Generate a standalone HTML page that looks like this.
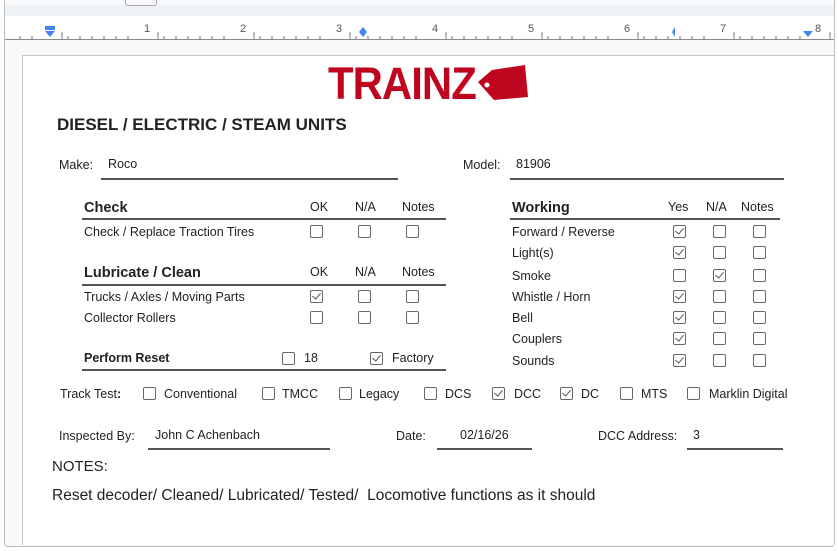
<!DOCTYPE html>
<html><head><meta charset="utf-8"><style>
*{margin:0;padding:0;box-sizing:border-box}
body{width:838px;height:551px;overflow:hidden;background:#fff;font-family:"Liberation Sans",sans-serif;color:#222;position:relative}
.a{position:absolute;white-space:nowrap;font-size:12.5px;line-height:16px}
.b{font-weight:bold}
.l{position:absolute;height:2px;background:#555}
.c{position:absolute;width:13px;height:13px;border:1.3px solid #666;border-radius:2px;background:#fff}
.c.k::after{content:"";position:absolute;left:3px;top:0px;width:4px;height:7px;border:solid #555;border-width:0 1.3px 1.3px 0;transform:rotate(40deg)}
</style></head><body>
<div style="position:absolute;left:4px;top:0;width:831px;height:547px;border:1px solid #bbb;border-top:none;border-radius:0 0 4px 4px;background:#f8f9fa"></div>
<div style="position:absolute;left:5px;top:5px;width:829px;height:11px;background:#eef1f6"></div>
<div style="position:absolute;left:125px;top:0;width:32px;height:6px;border:1px solid #aaa;border-top:none;border-radius:0 0 3px 3px"></div>
<svg style="position:absolute;left:5px;top:16px" width="829" height="24">
<rect x="0" y="0" width="829" height="23" fill="#fff"/>
<g transform="translate(-5 0)" stroke="#777" stroke-width="1">
<path d="M20 23v-3M32 23v-3M68 23v-3M80 23v-3M92 23v-3M104 23v-3M116 23v-3M128 23v-3M164 23v-3M176 23v-3M188 23v-3M200 23v-3M212 23v-3M224 23v-3M260 23v-3M272 23v-3M284 23v-3M296 23v-3M308 23v-3M320 23v-3M356 23v-3M368 23v-3M380 23v-3M392 23v-3M404 23v-3M416 23v-3M452 23v-3M464 23v-3M476 23v-3M488 23v-3M500 23v-3M512 23v-3M548 23v-3M560 23v-3M572 23v-3M584 23v-3M596 23v-3M608 23v-3M644 23v-3M656 23v-3M668 23v-3M680 23v-3M692 23v-3M704 23v-3M740 23v-3M752 23v-3M764 23v-3M776 23v-3M788 23v-3M800 23v-3"/>
<path d="M62 23v-7M158 23v-7M254 23v-7M350 23v-7M446 23v-7M542 23v-7M638 23v-7M734 23v-7M830 23v-7"/>
</g>
<g transform="translate(-5 0)" font-size="11" fill="#555" font-family="Liberation Sans" text-anchor="middle"><text x="147" y="16">1</text><text x="243" y="16">2</text><text x="339" y="16">3</text><text x="435" y="16">4</text><text x="531" y="16">5</text><text x="627" y="16">6</text><text x="723" y="16">7</text><text x="818" y="16">8</text>
<rect x="45" y="10" width="10" height="4" fill="#4285f4"/>
<path d="M45 15h10l-5 6z" fill="#4285f4"/>
<path d="M363 11l4 5-4 5-4-5z" fill="#4285f4"/>
<path d="M675 11v10l-3-5z" fill="#4285f4"/>
<path d="M803 15h10l-5 6z" fill="#4285f4"/></g>
</svg>
<div style="position:absolute;left:5px;top:39px;width:829px;height:1px;background:#888"></div>
<div style="position:absolute;left:22px;top:55px;width:812px;height:490px;background:#fff;border-left:1px solid #c8c8c8;border-top:1px solid #c8c8c8"></div>

<div class="a b" style="left:328px;top:60px;font-size:45px;line-height:48px;color:#c0061f;transform:scaleX(0.93);transform-origin:left;letter-spacing:-1px">TRAINZ</div>
<svg style="position:absolute;left:466px;top:60px" width="70" height="44"><path d="M12 22l14-12 33-5 3 32-34 3z" fill="#c0061f"/><circle cx="21" cy="25" r="2.5" fill="#fff"/></svg>

<div class="a b" style="left:57px;top:115px;font-size:17px;line-height:20px">DIESEL / ELECTRIC / STEAM UNITS</div>

<div class="a" style="left:59px;top:157px">Make:</div><div class="a" style="left:108px;top:156px">Roco</div><div class="l" style="left:101px;top:178px;width:297px"></div>
<div class="a" style="left:463px;top:157px">Model:</div><div class="a" style="left:516px;top:156px">81906</div><div class="l" style="left:510px;top:178px;width:274px"></div>

<div class="a b" style="left:84px;top:200px;font-size:14.5px">Check</div>
<div class="a" style="left:310px;top:199px">OK</div><div class="a" style="left:355px;top:199px">N/A</div><div class="a" style="left:402px;top:199px">Notes</div>
<div class="l" style="left:82px;top:218px;width:364px"></div>
<div class="a" style="left:84px;top:224px">Check / Replace Traction Tires</div>
<div class="c" style="left:310px;top:225px"></div><div class="c" style="left:358px;top:225px"></div><div class="c" style="left:406px;top:225px"></div>

<div class="a b" style="left:84px;top:265px;font-size:14.5px">Lubricate / Clean</div>
<div class="a" style="left:310px;top:264px">OK</div><div class="a" style="left:355px;top:264px">N/A</div><div class="a" style="left:402px;top:264px">Notes</div>
<div class="l" style="left:82px;top:284px;width:364px"></div>
<div class="a" style="left:84px;top:289px">Trucks / Axles / Moving Parts</div>
<div class="c k" style="left:310px;top:290px"></div><div class="c" style="left:358px;top:290px"></div><div class="c" style="left:406px;top:290px"></div>
<div class="a" style="left:84px;top:310px">Collector Rollers</div>
<div class="c" style="left:310px;top:311px"></div><div class="c" style="left:358px;top:311px"></div><div class="c" style="left:406px;top:311px"></div>

<div class="a b" style="left:84px;top:350px">Perform Reset</div>
<div class="c" style="left:282px;top:352px"></div><div class="a" style="left:304px;top:350px">18</div>
<div class="c k" style="left:370px;top:352px"></div><div class="a" style="left:392px;top:350px">Factory</div>
<div class="l" style="left:82px;top:369px;width:364px"></div>

<div class="a b" style="left:512px;top:200px;font-size:14.5px">Working</div>
<div class="a" style="left:668px;top:199px">Yes</div><div class="a" style="left:706px;top:199px">N/A</div><div class="a" style="left:741px;top:199px">Notes</div>
<div class="l" style="left:510px;top:218px;width:270px"></div>
<div class="a" style="left:512px;top:224px">Forward / Reverse</div>
<div class="a" style="left:512px;top:245px">Light(s)</div>
<div class="a" style="left:512px;top:268px">Smoke</div>
<div class="a" style="left:512px;top:289px">Whistle / Horn</div>
<div class="a" style="left:512px;top:310px">Bell</div>
<div class="a" style="left:512px;top:331px">Couplers</div>
<div class="a" style="left:512px;top:353px">Sounds</div>
<div class="c k" style="left:673px;top:225px"></div><div class="c" style="left:713px;top:225px"></div><div class="c" style="left:753px;top:225px"></div>
<div class="c k" style="left:673px;top:246px"></div><div class="c" style="left:713px;top:246px"></div><div class="c" style="left:753px;top:246px"></div>
<div class="c" style="left:673px;top:269px"></div><div class="c k" style="left:713px;top:269px"></div><div class="c" style="left:753px;top:269px"></div>
<div class="c k" style="left:673px;top:290px"></div><div class="c" style="left:713px;top:290px"></div><div class="c" style="left:753px;top:290px"></div>
<div class="c k" style="left:673px;top:311px"></div><div class="c" style="left:713px;top:311px"></div><div class="c" style="left:753px;top:311px"></div>
<div class="c k" style="left:673px;top:332px"></div><div class="c" style="left:713px;top:332px"></div><div class="c" style="left:753px;top:332px"></div>
<div class="c k" style="left:673px;top:354px"></div><div class="c" style="left:713px;top:354px"></div><div class="c" style="left:753px;top:354px"></div>

<div class="a" style="left:60px;top:386px">Track Test<b>:</b></div>
<div class="c" style="left:143px;top:387px"></div><div class="a" style="left:164px;top:386px">Conventional</div>
<div class="c" style="left:262px;top:387px"></div><div class="a" style="left:282px;top:386px">TMCC</div>
<div class="c" style="left:339px;top:387px"></div><div class="a" style="left:359px;top:386px">Legacy</div>
<div class="c" style="left:424px;top:387px"></div><div class="a" style="left:445px;top:386px">DCS</div>
<div class="c k" style="left:492px;top:387px"></div><div class="a" style="left:514px;top:386px">DCC</div>
<div class="c k" style="left:560px;top:387px"></div><div class="a" style="left:581px;top:386px">DC</div>
<div class="c" style="left:620px;top:387px"></div><div class="a" style="left:641px;top:386px">MTS</div>
<div class="c" style="left:687px;top:387px"></div><div class="a" style="left:709px;top:386px">Marklin Digital</div>

<div class="a" style="left:59px;top:428px">Inspected By:</div><div class="a" style="left:155px;top:427px">John C Achenbach</div><div class="l" style="left:148px;top:448px;width:182px"></div>
<div class="a" style="left:396px;top:428px">Date:</div><div class="a" style="left:460px;top:427px">02/16/26</div><div class="l" style="left:437px;top:448px;width:95px"></div>
<div class="a" style="left:598px;top:428px">DCC Address:</div><div class="a" style="left:693px;top:427px">3</div><div class="l" style="left:687px;top:448px;width:96px"></div>

<div class="a" style="left:52px;top:458px;font-size:15px;line-height:18px">NOTES:</div>
<div class="a" style="left:52px;top:487px;font-size:15.5px;line-height:18px">Reset decoder/ Cleaned/ Lubricated/ Tested/&nbsp; Locomotive functions as it should</div>
</body></html>
